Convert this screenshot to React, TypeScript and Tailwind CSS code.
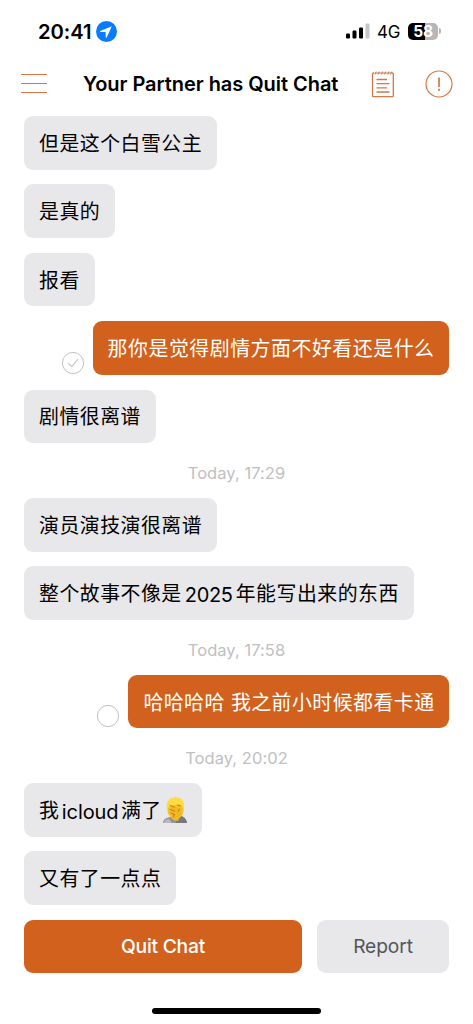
import type { ReactNode } from "react";

function Latin({ children, className }: { children: ReactNode; className: string }) {
  return <span className={`inline-block font-[Inter,sans-serif] ${className}`}>{children}</span>;
}

function Bubble({ children, mine = false, status }: { children: ReactNode; mine?: boolean; status?: "read" | "sent" }) {
  return (
    <div className={`mb-[14.8px] flex items-end ${mine ? "justify-end" : "justify-start"}`}>
      {status && (
        <svg className="mr-[8px] size-[24px] shrink-0" viewBox="0 0 24 24" fill="none" stroke="#c2c2c6">
          <circle cx="12" cy="12" r="10.6" strokeWidth="1" />
          {status === "read" && <path d="M7.2 12.1l3.7 3.5 6-7.6" strokeWidth="1.1" />}
        </svg>
      )}
      <div
        className={`flex h-[53.6px] items-center whitespace-nowrap rounded-[9px] pt-[4px] pl-[15px] text-[19.9px] ${
          mine ? "bg-[#d1611c] pr-[14.5px] text-white" : "bg-[#e8e8eb] pr-[14.8px] tracking-[0.5px] text-black"
        } ${status === "read" ? "tracking-[0.54px]" : ""} ${status === "sent" ? "tracking-[0.47px]" : ""}`}
      >
        {children}
      </div>
    </div>
  );
}

function Stamp({ children }: { children: ReactNode }) {
  return (
    <div className="mb-[14.8px] flex h-[25.2px] items-center justify-center font-[Inter,sans-serif] text-[16.5px] tracking-[0.05px] text-[#c0c0c2]">
      <span className="pt-[6px]">{children}</span>
    </div>
  );
}

function Facepalm() {
  return (
    <svg role="img" aria-label="🤦" className="mb-[3px] h-[27px] w-[26px]" viewBox="0 0 26 27">
      <path d="M1 26c0-4 4-5.500 8-6h9c4 .5 7 2 7 6z" fill="#929398" />
      <path d="M14 22l4-4 5 3 2 5H14z" fill="#77797e" />
      <path d="M2 25c1-2 3-3 5-3l3 4H2z" fill="#b9babd" />
      <ellipse cx="13.500" cy="11.500" rx="8.300" ry="11" fill="#f6bf2c" />
      <path d="M5.100 13C3.500 5 7 .5 13.500 .5c7 0 9.800 4.500 8.300 12-1-3-3-4.500-5-5-3 1-6 .5-8.500 1.500-2 .8-2.500 2-3.200 4z" fill="#ffda43" />
      <path d="M8.500 11l4-1.500 6 3c1.500 2 1 5-.5 6.500l-2 5-5-1-1-5-2-3 1-.5 2.500 1-3-3z" fill="#f3b722" />
      <path d="M8 8.500l4.500 1.700M15.500 8l3 1M8 12.500l4.500 1.500M9 16l3 1.500M11 20l1.500-2.500M17.500 12l-1.500 2.500" fill="none" stroke="#a96c12" strokeWidth=".8" strokeLinecap="round" />
    </svg>
  );
}

export default function App() {
  return (
    <div className="flex h-[1024px] w-[473px] flex-col overflow-hidden bg-white font-[Inter,'Noto_Sans_CJK_SC',sans-serif] text-black">
      <div className="flex h-[62px] shrink-0 items-center pr-[32px] pl-[38px]">
        <span className="pt-[2px] text-[20.2px] leading-none font-semibold tracking-[-0.05px]">20:41</span>
        <svg className="ml-auto size-[21px]" viewBox="0 0 21 21">
          <circle cx="10.500" cy="10.500" r="10.500" fill="#087cff" />
          <path d="M15.800 5.200L4.300 10.100c-.5.200-.4.800.1.800l5.200.2.200 5.200c0 .6.700.7.900.1z" fill="#fff" />
        </svg>
        <svg className="ml-[229px] h-[16px] w-[24px]" viewBox="0 0 24 16">
          <rect x="0" y="10.500" width="4" height="5" rx="1.200" />
          <rect x="6.500" y="7.500" width="4" height="8" rx="1.200" />
          <rect x="13" y="4.500" width="4" height="11" rx="1.200" />
          <rect x="19.500" y="0.500" width="4" height="15" rx="1.200" fill="#c6c6c6" />
        </svg>
        <span className="ml-[7px] w-[23px] pt-[2px] text-[17px] leading-none tracking-[-0.3px]">4G</span>
        <div className="ml-[8px] flex h-[17px] w-[30px] items-center justify-center rounded-[5px] bg-linear-to-r from-black from-58% to-[#b7b7b7] to-58% pt-[2px] text-[15.5px] leading-none font-bold tracking-[-0.3px] text-white">
          58
        </div>
        <div className="ml-[1px] h-[6px] w-[2px] rounded-r-full bg-[#b7b7b7]" />
      </div>

      <header className="flex h-[54px] shrink-0 items-center pr-[20px] pb-[11px] pl-[20px]">
        <svg className="h-[22px] w-[28px]" viewBox="0 0 28 22" stroke="#d17848" strokeWidth="1.200">
          <path d="M1 1.500h26M1 10.500h26M1 19.500h26" />
        </svg>
        <h1 className="ml-[35px] whitespace-nowrap text-[20px] leading-none font-semibold tracking-[-0.05px]">Your Partner has Quit Chat</h1>
        <svg className="ml-auto h-[28px] w-[24px]" viewBox="0 0 24 28" fill="none" stroke="#d17848" strokeWidth="1.300">
          <path d="M3 3H2.500a1 1 0 0 0-1 1v21.700a1 1 0 0 0 1 1h18.800a1 1 0 0 0 1-1V4a1 1 0 0 0-1-1h-.5" />
          <path d="M5.500 9.500h10.500M5.500 13.700h13M5.500 17.900h10.500M5.500 22h13" />
          <path d="M4 4.500l1.200-3M7.200 4.500l1.200-3M10.400 4.500l1.200-3M13.600 4.500l1.200-3M16.800 4.500l1.200-3M19.600 4.500l1.200-3M3.500 3h17" strokeWidth="1" />
        </svg>
        <svg className="ml-[30px] size-[28px]" viewBox="0 0 28 28" fill="none" stroke="#d17848">
          <circle cx="14" cy="14" r="13" strokeWidth="1.200" />
          <path d="M14 7.500v9.500M14 18.800v2.200" strokeWidth="1.700" />
        </svg>
      </header>

      <main className="flex h-[804px] shrink-0 flex-col pr-[24px] pl-[24px]">
        <Bubble>但是这个白雪公主</Bubble>
        <Bubble>是真的</Bubble>
        <Bubble>报看</Bubble>
        <Bubble mine status="read">那你是觉得剧情方面不好看还是什么</Bubble>
        <Bubble>剧情很离谱</Bubble>
        <Stamp>Today, 17:29</Stamp>
        <Bubble>演员演技演很离谱</Bubble>
        <Bubble>
          整个故事不像是<Latin className="w-[54px] text-center text-[20px] tracking-[-0.3px]">2025</Latin>年能写出来的东西
        </Bubble>
        <Stamp>Today, 17:58</Stamp>
        <Bubble mine status="sent">哈哈哈哈 我之前小时候都看卡通</Bubble>
        <Stamp>Today, 20:02</Stamp>
        <Bubble>
          我<Latin className="w-[61.500px] text-center text-[20px] tracking-[-0.1px]">icloud</Latin>满了<Facepalm />
        </Bubble>
        <Bubble>又有了一点点</Bubble>
      </main>

      <footer className="flex shrink-0 gap-[15px] px-[24px]">
        <button className="h-[53px] w-[278px] rounded-[9px] bg-[#d1611c] text-[19.3px] font-medium tracking-[-0.25px] text-white">Quit Chat</button>
        <button className="h-[53px] flex-1 rounded-[9px] bg-[#e8e8eb] text-[19.2px] tracking-[-0.1px] text-[#545456]">Report</button>
      </footer>
      <div className="mt-[35px] ml-[152px] h-[6px] w-[169px] shrink-0 rounded-full bg-black" />
    </div>
  );
}
